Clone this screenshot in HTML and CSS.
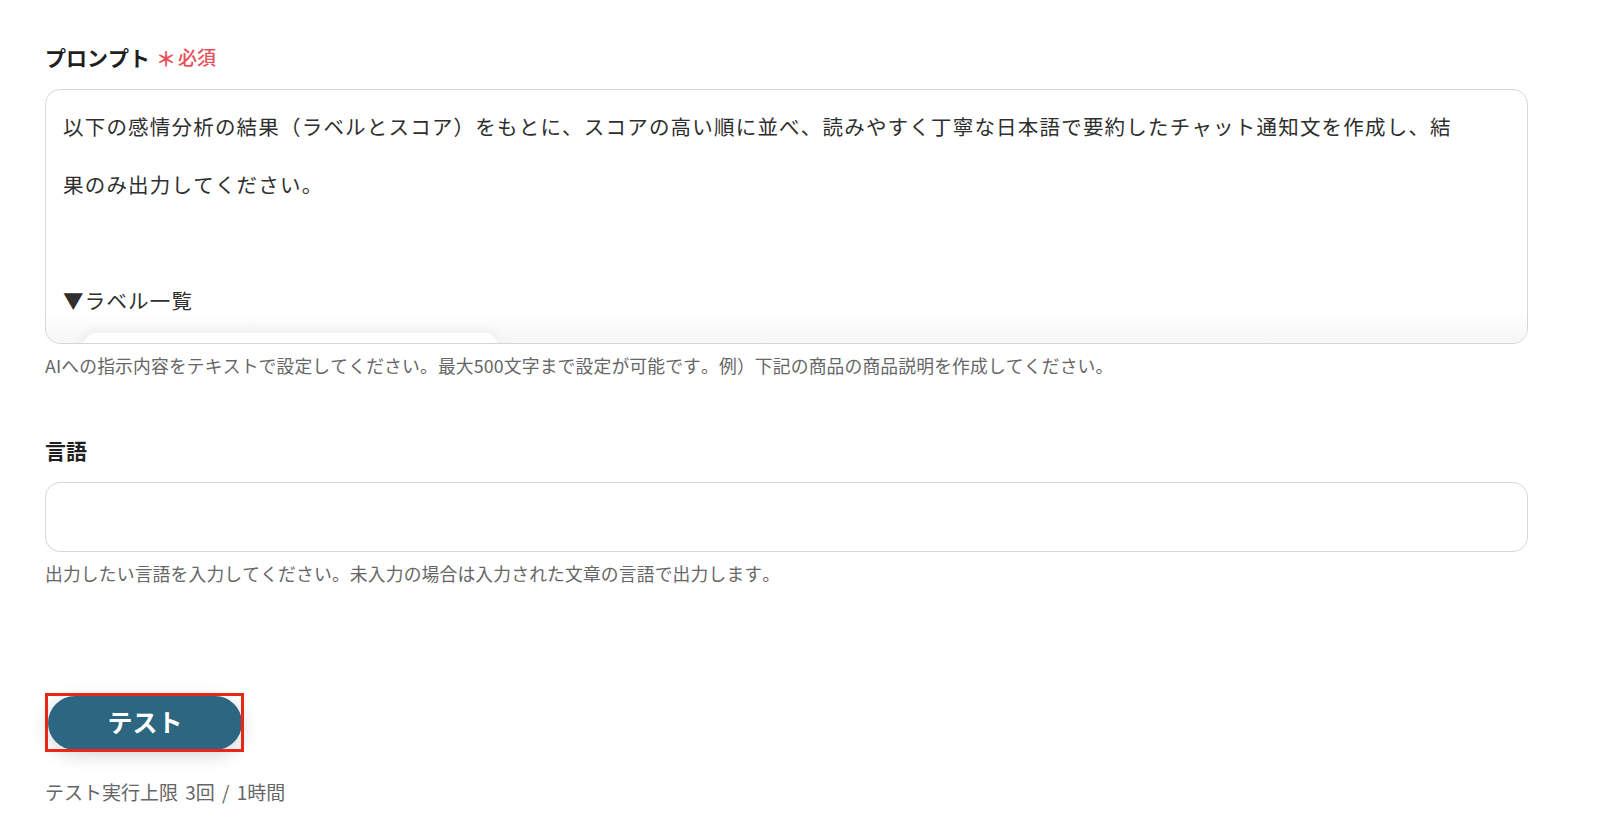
FILE: index.html
```html
<!DOCTYPE html>
<html lang="ja">
<head>
<meta charset="utf-8">
<title>設定</title>
<link rel="stylesheet" href="styles.css">
</head>
<body>
<main class="form">
  <section class="field">
    <div class="label">プロンプト<span class="req"><span class="ast">＊</span>必須</span></div>
    <div class="textarea">
      <div class="ta-text">以下の感情分析の結果（ラベルとスコア）をもとに、スコアの高い順に並べ、読みやすく丁寧な日本語で要約したチャット通知文を作成し、結<br>果のみ出力してください。<br><br>▼ラベル一覧</div>
      <div class="ta-card"></div>
      <div class="ta-fade"></div>
    </div>
    <p class="help">AIへの指示内容をテキストで設定してください。最大500文字まで設定が可能です。例）下記の商品の商品説明を作成してください。</p>
  </section>

  <section class="field field-lang">
    <div class="label">言語</div>
    <div class="input"></div>
    <p class="help">出力したい言語を入力してください。未入力の場合は入力された文章の言語で出力します。</p>
  </section>

  <div class="actions">
    <div class="btn-wrap">
      <button class="btn" type="button">テスト</button>
      <span class="highlight"></span>
    </div>
    <p class="limit">テスト実行上限 3回 / 1時間</p>
  </div>
</main>
</body>
</html>
```

FILE: styles.css
```css
* { box-sizing: border-box; }
html, body { margin: 0; padding: 0; background: #fff; }
body {
  font-family: "Noto Sans CJK JP", "Noto Sans", sans-serif;
  color: #222;
  font-kerning: none;
  font-feature-settings: "palt" 0, "kern" 0;
}
.form {
  width: 1483px;
  margin-left: 45px;
  padding-top: 42px;
}
.label {
  font-size: 21px;
  line-height: 30px;
  font-weight: 700;
  color: #1f1f1f;
  display: flex;
  align-items: center;
}
.req {
  color: #e8505b;
  font-size: 19px;
  font-weight: 500;
  margin-left: 6px;
  display: inline-flex;
  align-items: center;
}
.ast {
  font-size: 20px;
  font-weight: 700;
  margin-right: 2px;
  position: relative;
  top: 2px;
}
.textarea {
  position: relative;
  margin-top: 17px;
  height: 255px;
  border: 1.5px solid #d2d7de;
  border-radius: 15px;
  padding: 7px 17px 0;
  overflow: hidden;
  background: #fff;
}
.ta-text {
  font-size: 20.5px;
  line-height: 58px;
  letter-spacing: 1.2px;
  color: #2e2e2e;
  white-space: nowrap;
}
.ta-card {
  margin: 4px 0 0 20px;
  width: 415px;
  height: 40px;
  background: #fff;
  border-radius: 14px;
  box-shadow: 0 -2px 14px rgba(0,0,0,0.06);
  position: relative;
  z-index: 1;
}
.ta-fade {
  position: absolute;
  left: 0; right: 0; bottom: 0;
  height: 30px;
  background: linear-gradient(to bottom, rgba(240,240,242,0), rgba(240,240,242,0.6));
}
.help {
  margin: 9px 0 0;
  font-size: 17.8px;
  line-height: 24px;
  letter-spacing: 0.15px;
  color: #666;
}
.field-lang { margin-top: 58px; }
.input {
  margin-top: 17px;
  height: 70px;
  border: 1.5px solid #d2d7de;
  border-radius: 15px;
  background: #fff;
}
.actions { margin-top: 108px; }
.btn-wrap {
  position: relative;
  width: 199px;
  height: 59px;
  padding: 3px 2px 2px 3px;
}
.btn {
  display: block;
  width: 194px;
  height: 54px;
  border: none;
  border-radius: 27px;
  background: #2c6680;
  color: #fff;
  font-family: "Noto Sans CJK JP", sans-serif;
  font-size: 25px;
  line-height: 48px;
  font-weight: 700;
  box-shadow: 0 4px 18px rgba(0,0,0,0.18);
  padding: 0 0 4px;
}
.highlight {
  position: absolute;
  inset: 0;
  border: 3px solid #e8261a;
  pointer-events: none;
}
.limit {
  margin: 28px 0 0;
  font-size: 19px;
  line-height: 24px;
  color: #666;
  word-spacing: 3px;
}
```
